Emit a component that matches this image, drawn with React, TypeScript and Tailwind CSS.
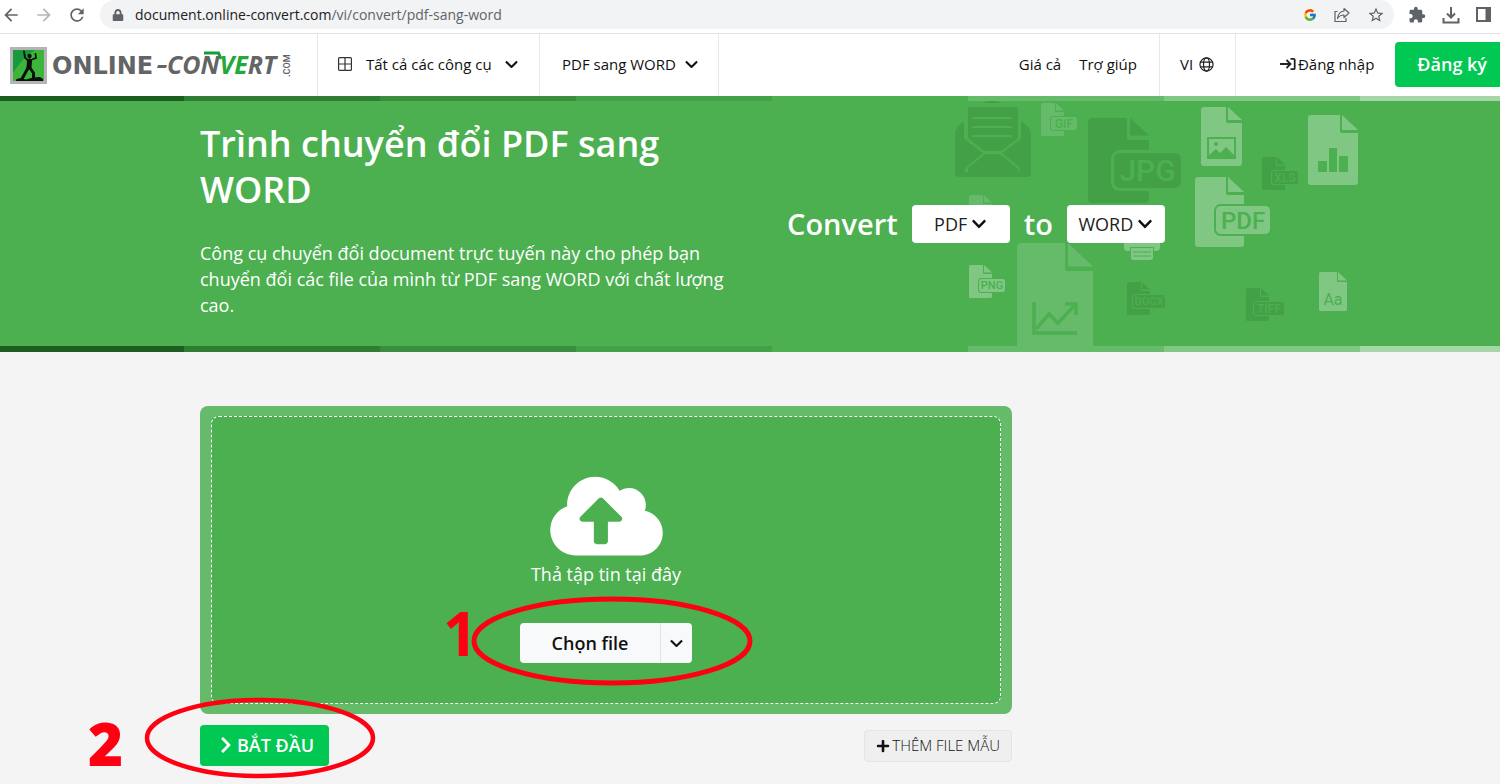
import type { ReactNode } from 'react';
import {
  FaChevronDown,
  FaChevronRight,
  FaCloudUploadAlt,
  FaLock,
  FaPlus,
} from 'react-icons/fa';
import { FcGoogle } from 'react-icons/fc';
import { MdArrowBack, MdArrowForward, MdExtension, MdRefresh, MdStarBorder } from 'react-icons/md';

const LIGHT = '#81c784';
const MID = '#66bb6a';
const DARK = '#43a047';
const BASE = '#4caf50';

function Chevron({ className }: { className?: string }) {
  return (
    <svg viewBox="0 0 14 9" className={className} fill="none" stroke="currentColor" strokeWidth="2.300" aria-hidden="true">
      <path d="M1 1.5 7 7.5 13 1.5" />
    </svg>
  );
}

function BrowserBar() {
  return (
    <div className="flex h-[34px] items-start border-b border-[#dfe1e5] bg-white text-[#5f6368]">
      <div className="flex h-[29px] w-[100px] shrink-0 items-center gap-[13px] pl-px">
        <button type="button" aria-label="Back">
          <MdArrowBack className="size-5" />
        </button>
        <button type="button" aria-label="Forward" className="text-[#b4b6b9]">
          <MdArrowForward className="size-5" />
        </button>
        <button type="button" aria-label="Reload">
          <MdRefresh className="size-5" />
        </button>
      </div>
      <div className="flex h-[29px] flex-1 items-center rounded-full bg-[#f1f3f4] pr-[9px] pl-3">
        <FaLock className="size-3" />
        <p className="ml-[11px] flex-1 text-sm text-[#5f6368]">
          <span className="text-[#202124]">document.online-convert.com</span>/vi/convert/pdf-sang-word
        </p>
        <div className="flex items-center gap-[17px]">
          <FcGoogle className="size-[14px]" />
          <button type="button" aria-label="Share">
            <svg viewBox="0 0 16 16" className="size-4" fill="none" stroke="currentColor" strokeWidth="1.2" aria-hidden="true">
              <path d="M3.5 4.5H1v10h11V11" />
              <path d="M10 1.5 15 6l-5 4.5V8C7 8 5 9 3.5 11.500 4 7 6 4.500 10 4Z" strokeLinejoin="round" />
            </svg>
          </button>
          <button type="button" aria-label="Bookmark">
            <MdStarBorder className="size-[18px]" />
          </button>
        </div>
      </div>
      <div className="flex h-[29px] items-center gap-4 pr-[9px] pl-3.5">
        <button type="button" aria-label="Extensions">
          <MdExtension className="size-[18px]" />
        </button>
        <button type="button" aria-label="Downloads">
          <svg viewBox="0 0 18 18" className="size-[18px]" fill="none" stroke="currentColor" strokeWidth="2" aria-hidden="true">
            <path d="M9 1v10M5 7.500l4 4 4-4M1.500 12v4.500h15V12" />
          </svg>
        </button>
        <button type="button" aria-label="Side panel">
          <svg viewBox="0 0 15 15" className="size-[15px]" aria-hidden="true">
            <path d="M1 1h13v13H1Z" fill="none" stroke="currentColor" strokeWidth="2" />
            <path d="M9.500 1H15v13H9.500Z" fill="currentColor" />
          </svg>
        </button>
      </div>
    </div>
  );
}

function Logo() {
  return (
    <svg viewBox="0 0 284 40" className="h-10 w-[284px]" role="img" aria-label="Online-Convert.com">
      <path d="M1 2h37v37H1Z" fill="#b5b3b8" />
      <path d="M4 5h31v31H4Z" fill="#3db53a" />
      <path d="M4 5h22C18 10 11 17 4 28Z" fill="#179a3c" />
      <g fill="none" stroke="#0a0f0a" strokeLinecap="round" strokeLinejoin="round">
        <path d="m15 6.500 1 6 3 3 4-1 4-1.500-.5-4" strokeWidth="1.800" />
        <path d="m20.500 16-.5 6" strokeWidth="5" />
        <path d="m19 23-5.500 10M21 23l3.500 5v5" strokeWidth="3" />
      </g>
      <circle cx="20.500" cy="11" r="2.200" fill="#0a0f0a" />
      <path d="M7 36v-1.500l4-1.500 6 1.500 7-2 7-.5 3 2v2Z" fill="#0a0f0a" />
      <text x="43" y="29" fontSize="24" fontWeight="700" fill="#636466" className="font-['DejaVu_Sans',sans-serif]">
        ONLINE
      </text>
      <path d="M149 20h9l-1 3h-9Z" fill="#636466" />
      <text x="158" y="29" fontSize="25" fontWeight="700" fontStyle="italic" fill="#636466" className="font-['Open_Sans',sans-serif]">
        CON<tspan fill="#23a83c">VE</tspan>RT
      </text>
      <path d="M195 8h14.500l2.500 6" fill="none" stroke="#12a03c" strokeWidth="3" />
      <text transform="translate(281 32) rotate(-90)" fontSize="9" fontWeight="600" fill="#636466" className="font-['Roboto',sans-serif]">
        .COM
      </text>
    </svg>
  );
}

function Header() {
  return (
    <header className="flex h-[62px] items-stretch bg-white text-[15px] text-[#111]">
      <a href="#" className="flex w-[317px] shrink-0 items-center pl-[9px]">
        <Logo />
      </a>
      <button type="button" className="flex w-[222px] items-center border-l border-[#e8e8e8] pb-0.5 pl-5">
        <svg viewBox="0 0 14 14" className="size-3.5" fill="none" stroke="#333" strokeWidth="1.200" aria-hidden="true">
          <rect x=".6" y=".6" width="12.800" height="12.800" rx="1" />
          <path d="M7 1v12M1 7h12" />
        </svg>
        <span className="mr-[13px] ml-3.5">Tất cả các công cụ</span>
        <Chevron className="w-[13px]" />
      </button>
      <button type="button" className="flex w-[180px] items-center gap-[9px] border-x border-[#e8e8e8] pb-0.5 pl-[22px]">
        PDF sang WORD
        <Chevron className="w-[13px]" />
      </button>
      <nav className="ml-auto flex items-center gap-[18px] pr-[22px] pb-0.5">
        <a href="#">Giá cả</a>
        <a href="#">Trợ giúp</a>
      </nav>
      <button type="button" className="flex w-[77px] items-center gap-1.5 border-x border-[#e8e8e8] pb-0.5 pl-5">
        VI
        <svg viewBox="0 0 16 16" className="size-[15px]" fill="none" stroke="#222" strokeWidth="1.300" aria-hidden="true">
          <circle cx="8" cy="8" r="7" />
          <ellipse cx="8" cy="8" rx="3.200" ry="7" />
          <path d="M1.500 5.500h13M1.500 10.500h13" />
        </svg>
      </button>
      <a href="#" className="ml-11 flex items-center gap-0.5 pb-0.5">
        <svg viewBox="0 0 16 14" className="w-4" fill="none" stroke="#222" strokeWidth="1.800" aria-hidden="true">
          <path d="M0 7h10M6.500 3 10.500 7 6.500 11M10.500 1.800h3.200a1 1 0 0 1 1 1v8.400a1 1 0 0 1-1 1h-3.200" />
        </svg>
        Đăng nhập
      </a>
      <a href="#" className="mt-2 mb-[9px] ml-[21px] flex items-center rounded-l bg-[#00c853] pr-[13px] pb-0.5 pl-[22px] text-lg font-semibold text-white">
        Đăng ký
      </a>
    </header>
  );
}

function Stripes({ className }: { className: string }) {
  return (
    <div className="overflow-hidden">
      <div className={`-mr-14 -ml-3 flex ${className}`}>
        <div className="flex-1 bg-[#1b5e20]" />
        <div className="flex-1 bg-[#2e7d32]" />
        <div className="flex-1 bg-[#388e3c]" />
        <div className="flex-1 bg-[#43a047]" />
        <div className="flex-1 bg-[#4caf50]" />
        <div className="flex-1 bg-[#66bb6a]" />
        <div className="flex-1 bg-[#81c784]" />
        <div className="flex-1 bg-[#a5d6a7]" />
      </div>
    </div>
  );
}

type FileIconProps = {
  x: number;
  y: number;
  w: number;
  h: number;
  fold: number;
  gap: number;
  fill: string;
  tag?: { text: string; x: number; y: number; w: number; h: number; size: number };
  children?: ReactNode;
};

// Page with a folded corner and an optional format tag over it
function FileIcon({ x, y, w, h, fold, gap, fill, tag, children }: FileIconProps) {
  const r = gap * 1.5;
  const right = x + w;
  const cut = right - fold - gap;
  const bottom = y + h;
  return (
    <g fill={fill}>
      <path
        d={`M${x + r} ${y}H${cut}V${y + fold}q0 ${gap} ${gap} ${gap}H${right}V${bottom - r}q0 ${r} ${-r} ${r}H${x + r}q${-r} 0 ${-r} ${-r}V${y + r}q0 ${-r} ${r} ${-r}Z`}
      />
      <path d={`M${right - fold} ${y}L${right} ${y + fold - gap / 2}H${right - fold + gap / 2}q${-gap / 2} 0 ${-gap / 2} ${-gap / 2}Z`} />
      {tag && (
        <>
          <rect
            x={tag.x}
            y={tag.y}
            width={tag.w}
            height={tag.h}
            rx={tag.h / 6}
            stroke={BASE}
            strokeWidth={gap * 2}
            paintOrder="stroke"
          />
          <text
            x={tag.x + tag.w / 2}
            y={tag.y + tag.h / 2 + tag.size * 0.36}
            fontSize={tag.size}
            fontWeight="500"
            textAnchor="middle"
            fill={BASE}
            className="font-[Roboto,sans-serif]"
          >
            {tag.text}
          </text>
        </>
      )}
      {children}
    </g>
  );
}

function HeroArt() {
  return (
    <svg viewBox="930 101 440 245" className="absolute top-0 -right-[70px] h-[245px] w-[440px]" aria-hidden="true">
      {/* Open envelope */}
      <g fill={DARK}>
        <path d="M982 103q10-4 20 0Z" />
        <path d="M965 120v19l19 14-20 18 3 2 21-19h8l21 19 3-2-20-18 19-14v-19q12 7 12 14v39q0 4-4 4h-68q-4 0-4-4v-39q0-7 11-14Z" />
        <path d="M970 107h46q2 0 2 2v29l-16 13h-18l-16-13v-29q0-2 2-2Z" />
        <path d="m988 156h9l19 20h-47Z" />
        <path d="M968 165 985 154h16l17 11v8h-50Z" />
        <g fill="none" stroke={BASE} strokeWidth="2">
          <path d="M972 118h40M972 127h40M972 136h40M965 116v22l19 15h17l19-15v-22M985 153l-20 16M1000 153l20 16" />
        </g>
      </g>
      <FileIcon x={1041} y={103} w={23} h={33} fold={8} gap={1} fill={MID} tag={{ text: 'GIF', x: 1051, y: 117, w: 26, h: 13, size: 12 }} />
      <FileIcon x={1088} y={118} w={61} h={85} fold={19} gap={3} fill={DARK} tag={{ text: 'JPG', x: 1114, y: 153, w: 67, h: 35, size: 30 }} />
      <FileIcon x={969} y={195} w={23} h={33} fold={8} gap={1} fill={MID} />
      <FileIcon x={969} y={265} w={23} h={33} fold={8} gap={1} fill={LIGHT} tag={{ text: 'PNG', x: 979, y: 279, w: 26, h: 13, size: 11 }} />
      <FileIcon x={1017} y={243} w={76} h={110} fold={25} gap={3} fill={MID}>
        <path d="M1034 302v31h43M1036 329l13-15 9 9 16-17M1065 304h11v11" fill="none" stroke={BASE} strokeWidth="3.500" />
      </FileIcon>
      {/* Printer */}
      <g fill={LIGHT}>
        <path d="M1124 240h36v7q0 4-4 4h-2v-4h-24v4h-2q-4 0-4-4Z" />
        <path d="M1131 248h22v10q0 2-2 2h-18q-2 0-2-2Z" />
        <path d="M1133 252h18M1133 256h18" stroke={BASE} />
      </g>
      <FileIcon x={1127} y={282} w={23} h={33} fold={8} gap={1} fill={DARK} tag={{ text: 'DOCX', x: 1133, y: 295, w: 32, h: 13, size: 11 }} />
      <FileIcon x={1201} y={107} w={41} h={59} fold={14} gap={2} fill={LIGHT}>
        <path d="M1207 137h29v22h-29Z" fill={BASE} />
        <path d="M1209 139h25v16l-8-8-6 6-4-4-7 6Z" />
        <circle cx="1216" cy="144" r="2" fill={BASE} />
      </FileIcon>
      <FileIcon x={1308} y={115} w={50} h={70} fold={16} gap={2} fill={LIGHT}>
        <path d="M1318 161h9v11h-9ZM1329 148h8v24h-8ZM1339 156h9v16h-9Z" fill={BASE} />
      </FileIcon>
      <FileIcon x={1262} y={157} w={23} h={33} fold={8} gap={1} fill={DARK} tag={{ text: 'XLS', x: 1272, y: 171, w: 26, h: 13, size: 12 }} />
      <FileIcon x={1195} y={177} w={49} h={70} fold={16} gap={2} fill={LIGHT} tag={{ text: 'PDF', x: 1216, y: 206, w: 54, h: 28, size: 24 }} />
      <FileIcon x={1246} y={288} w={23} h={33} fold={8} gap={1} fill={DARK} tag={{ text: 'TIFF', x: 1254, y: 302, w: 30, h: 13, size: 12 }} />
      <FileIcon x={1319} y={272} w={28} h={39} fold={9} gap={1} fill={LIGHT}>
        <text x="1333" y="305" fontSize="16" textAnchor="middle" fill={BASE} className="font-[Roboto,sans-serif]">
          Aa
        </text>
      </FileIcon>
    </svg>
  );
}

function FormatSelect({ label, value, options }: { label: string; value: string; options: string[] }) {
  return (
    <label className="flex h-[38px] w-[98px] items-center justify-center gap-1 rounded bg-white text-[#222]">
      <select aria-label={label} defaultValue={value} className="field-sizing-content appearance-none bg-transparent text-lg font-normal outline-none">
        {options.map((option) => (
          <option key={option}>{option}</option>
        ))}
      </select>
      <FaChevronDown className="size-4 text-[#111]" />
    </label>
  );
}

function Hero() {
  return (
    <section className="bg-[#4caf50] text-white">
      <Stripes className="h-[5px]" />
      <div className="overflow-hidden">
        <div className="relative mx-auto flex max-w-[1100px] items-center">
          <HeroArt />
          <div className="w-1/2 shrink-0 pt-5 pb-7">
            <h1 className="text-4xl leading-[46px] font-semibold">Trình chuyển đổi PDF sang WORD</h1>
            <p className="mt-[27px] text-lg leading-[26px]">
              Công cụ chuyển đổi document trực tuyến này cho phép bạn chuyển đổi các file của mình từ PDF sang WORD với
              chất lượng cao.
            </p>
          </div>
          <div className="relative flex items-center gap-3.5 pl-[37px] text-[29px] font-semibold">
            <span>Convert</span>
            <FormatSelect label="Convert from" value="PDF" options={['PDF', 'JPG', 'PNG']} />
            <span>to</span>
            <FormatSelect label="Convert to" value="WORD" options={['WORD', 'DOCX', 'TIFF']} />
          </div>
        </div>
      </div>
      <Stripes className="h-[6px]" />
    </section>
  );
}

function DropZone() {
  return (
    <div className="rounded-lg bg-[#66bb6a] px-[11px] py-2.5">
      <div className="flex flex-col items-center rounded-lg border border-dashed border-white bg-[#4caf50] pt-[54px] pb-10 text-white">
        <FaCloudUploadAlt className="h-[90px] w-[113px]" />
        <p className="text-lg leading-[26px]">Thả tập tin tại đây</p>
        <div className="relative mt-9 flex h-10 rounded bg-[#f8f9fa] text-[#111]">
          <button type="button" className="w-[141px] border-r border-[#e2e4e6] text-lg font-semibold">
            Chọn file
          </button>
          <button type="button" aria-label="Chọn nguồn" className="flex w-[31px] items-center justify-center">
            <Chevron className="w-[13px]" />
          </button>
          <svg viewBox="0 0 282 90" className="pointer-events-none absolute -top-[27px] -left-[49px] h-[90px] w-[282px] max-w-none" aria-hidden="true">
            <ellipse cx="141" cy="45" rx="138" ry="42" fill="none" stroke="#ff0013" strokeWidth="5" />
          </svg>
          <span className="absolute -top-5 -left-[77px] text-[60px] leading-[60px] font-bold text-[#ff0013]">1</span>
        </div>
      </div>
    </div>
  );
}

export default function App() {
  return (
    <div className="min-h-screen overflow-x-hidden bg-[#f4f4f4] font-['Open_Sans','Noto_Sans',sans-serif]">
      <BrowserBar />
      <Header />
      <Hero />
      <main className="mx-auto max-w-[1100px] pt-[54px] pb-4">
        <div className="max-w-[812px]">
          <DropZone />
          <div className="mt-[11px] flex items-center justify-between">
            <div className="relative">
              <button type="button" className="flex h-[41px] w-[129px] items-center justify-center gap-0.5 rounded bg-[#00c853] pb-0.5 pl-0.5 text-lg font-semibold text-white">
                <FaChevronRight className="size-[18px]" />
                BẮT ĐẦU
              </button>
              <svg viewBox="0 0 232 82" className="pointer-events-none absolute -top-7 -left-14 h-[82px] w-[232px] max-w-none" aria-hidden="true">
                <ellipse cx="116" cy="41" rx="113" ry="38" fill="none" stroke="#ff0013" strokeWidth="4.500" />
              </svg>
              <span className="absolute -top-3 -left-28 text-[60px] leading-[60px] font-extrabold text-[#ff0013]">2</span>
            </div>
            <button type="button" className="flex h-8 items-center gap-0.5 rounded border border-[#e4e4e4] bg-[#efefef] px-[11px] text-[15px] font-light text-[#111]">
              <FaPlus className="size-3.5" />
              THÊM FILE MẪU
            </button>
          </div>
        </div>
      </main>
    </div>
  );
}
